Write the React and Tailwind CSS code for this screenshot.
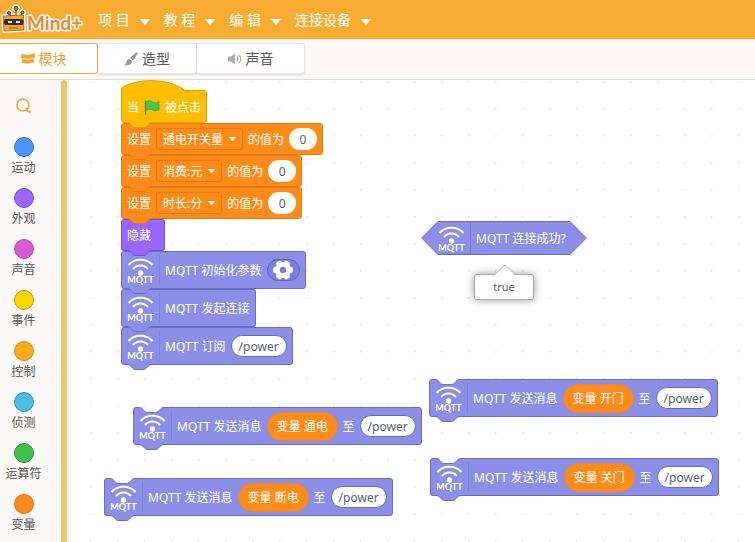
import React, { useState } from 'react';
import clsx from 'clsx';

const menus = ['项 目', '教 程', '编 辑', '连接设备'];

const categories = [
  { name: '运动', color: 'bg-[#4c97ff] border-[#3373cc]' },
  { name: '外观', color: 'bg-[#9966ff] border-[#774dcb]' },
  { name: '声音', color: 'bg-[#d65cd6] border-[#bd42bd]' },
  { name: '事件', color: 'bg-[#ffd500] border-[#cc9900]' },
  { name: '控制', color: 'bg-[#ffab19] border-[#cf8b17]' },
  { name: '侦测', color: 'bg-[#4cbfe6] border-[#2e8eb8]' },
  { name: '运算符', color: 'bg-[#40bf4a] border-[#389438]' },
  { name: '变量', color: 'bg-[#ff8c1a] border-[#db6e00]' },
];

const palette = {
  event: { box: 'bg-[#ffbf00] border-[#dca600]', fill: '#ffbf00', stroke: '#dca600' },
  data: { box: 'bg-[#ff8c1a] border-[#e57a0c]', fill: '#ff8c1a', stroke: '#e57a0c' },
  looks: { box: 'bg-[#9966ff] border-[#774dcb]', fill: '#9966ff', stroke: '#774dcb' },
  mqtt: { box: 'bg-[#8c8fe8] border-[#6a6cc0]', fill: '#8c8fe8', stroke: '#6a6cc0' },
};

const notchPath = 'M0 0 C2 0 3 1 4 2 L6 4 C7 5 8 5 9 5 H16 C17 5 18 5 19 4 L21 2 C22 1 23 0 25 0';

const Notch = ({ fill, stroke, className }) => (
  <svg className={clsx('absolute left-[5px] overflow-visible', className)} width="25" height="7" aria-hidden="true">
    <path d={`M0 -1 ${notchPath.replace('M', 'L')} V-1 Z`} fill={fill} />
    <path d={notchPath} transform="translate(0 .5)" fill={fill} stroke={stroke} />
  </svg>
);

const Block = ({ kind, open, className = 'h-8', children }) => {
  const c = palette[kind];
  return (
    <div
      className={clsx(
        'relative flex w-max items-center gap-[5px] rounded-[3px] border px-[5px] text-xs whitespace-nowrap text-white',
        c.box,
        className
      )}
    >
      {open && <Notch fill="#ffffff" stroke={c.stroke} className="-top-px" />}
      {children}
      <Notch fill={c.fill} stroke={c.stroke} className="top-full z-10" />
    </div>
  );
};

const Label = ({ children }) => <span className="pt-0.5">{children}</span>;

const MqttIcon = () => (
  <svg width="28" height="30" viewBox="0 0 28 30" fill="none" stroke="#fff" className="shrink-0" aria-hidden="true">
    <path d="M1.500 10 C7.500 3 19.500 3 25.500 10" strokeWidth="2.200" />
    <path d="M6 14 C10 9.300 17 9.300 21 14" strokeWidth="2.200" />
    <circle cx="13.500" cy="18" r="2.700" fill="#fff" stroke="none" />
    <text x="13.500" y="28" textAnchor="middle" fill="#fff" stroke="none" className="font-['Lato'] text-[9px] font-bold">
      MQTT
    </text>
  </svg>
);

const MqttBlock = ({ open, children }) => (
  <Block kind="mqtt" open={open} className="h-[38px]">
    <div className="border-r border-[#7e81d9] pr-1">
      <MqttIcon />
    </div>
    {children}
  </Block>
);

const Caret = () => (
  <svg width="7" height="4" viewBox="0 0 7 4" aria-hidden="true">
    <path d="M0 0H7L4 3.700Q3.500 4 3 3.700Z" fill="#fff" />
  </svg>
);

const VariableSelect = ({ name }) => (
  <button
    type="button"
    className="flex h-[22px] items-center gap-1.5 rounded-[3px] border border-[#ec7b0c] px-[6px] text-xs text-white"
  >
    <Label>{name}</Label>
    <Caret />
  </button>
);

const NumberInput = () => {
  const [value, setValue] = useState('0');
  return (
    <input
      aria-label="值"
      value={value}
      onChange={(e) => setValue(e.target.value)}
      className="h-[22px] w-7 rounded-full bg-white text-center text-xs text-[#575e75]"
    />
  );
};

const TopicInput = () => {
  const [value, setValue] = useState('/power');
  return (
    <input
      aria-label="主题"
      value={value}
      onChange={(e) => setValue(e.target.value)}
      className="h-[22px] w-14 rounded-full border border-[#6a6cc0] bg-white pt-px text-center text-xs text-[#575e75]"
    />
  );
};

const SetBlock = ({ name }) => (
  <Block kind="data">
    <Label>设置</Label>
    <VariableSelect name={name} />
    <Label>的值为</Label>
    <NumberInput />
  </Block>
);

const SendBlock = ({ variable }) => (
  <MqttBlock open>
    <Label>MQTT 发送消息</Label>
    <span className="flex h-[29px] w-[71px] items-center justify-center rounded-full border border-[#e58a3c] bg-[#ff8c1a]">
      <Label>变量 {variable}</Label>
    </span>
    <Label>至</Label>
    <TopicInput />
  </MqttBlock>
);

const HatBlock = () => (
  <div className="relative w-max pt-2.5">
    <Block kind="event" className="h-[33px] rounded-tl-none">
      <svg className="absolute -top-[11px] -left-px" width="68" height="13" aria-hidden="true">
        <path d="M0 13 V8 C16 -2 46 -2 62 9 C64 11 66 11.500 68 11.500 V13 Z" fill="#ffbf00" />
        <path d="M.5 13 V8 C16 -2 46 -2 62 9 C64 11 66 11.500 68 11.500" fill="none" stroke="#dca600" />
      </svg>
      <Label>当</Label>
      <svg width="16" height="16" viewBox="0 0 16 16" aria-hidden="true">
        <path d="M1.500 2 V15" stroke="#45993d" strokeWidth="1.400" strokeLinecap="round" />
        <path d="M2 3 C5 1 7 2 8.500 3 C10.500 4 12.500 4 15 2.500 V11 C12.500 12.500 10 12 8.500 11 C7 10 5 10 2 11.500Z" fill="#4cbf56" stroke="#45993d" strokeWidth=".7" />
      </svg>
      <Label>被点击</Label>
    </Block>
  </div>
);

const GearButton = () => (
  <button
    type="button"
    aria-label="设置参数"
    className="flex h-[22px] w-[33px] items-center justify-center rounded-full border border-[#5c60b8] bg-[#7c80dc]"
  >
    <svg width="20" height="20" viewBox="-10 -10 20 20">
      <g fill="#fff">
        <circle r="8" />
        {[30, 90, 150, 210, 270, 330].map((angle) => (
          <rect key={angle} x="-3" y="-9.900" width="6" height="6" rx="2" transform={`rotate(${angle})`} />
        ))}
      </g>
      <circle r="3.200" fill="#7c80dc" />
    </svg>
  </button>
);

const ReporterBlock = () => (
  <div className="flex h-[34px] w-max text-xs whitespace-nowrap text-white">
    <svg width="17" height="34" aria-hidden="true">
      <path d="M17 .5 L.7 17 L17 33.500" fill="#8c8fe8" stroke="#6a6cc0" />
    </svg>
    <div className="flex items-center gap-[5px] border-y border-[#6a6cc0] bg-[#8c8fe8] pr-1">
      <div className="flex h-full items-center border-r border-[#7679d2] pr-1">
        <MqttIcon />
      </div>
      <Label>MQTT 连接成功?</Label>
    </div>
    <svg width="17" height="34" aria-hidden="true">
      <path d="M0 .5 L16.300 17 L0 33.500" fill="#8c8fe8" stroke="#6a6cc0" />
    </svg>
  </div>
);

const ValueBubble = () => (
  <div className="relative flex h-[26px] w-[60px] items-center justify-center rounded-[3px] border border-[#aaa] bg-white text-[11px] text-[#575e75] shadow-[0_0_9px_rgba(0,0,0,0.4)]">
    <svg className="absolute -top-[11px] left-[18px]" width="24" height="12" aria-hidden="true">
      <path d="M1 11.500 L11 1.500 Q12 .5 13 1.500 L23 11.500" fill="#fff" stroke="#aaa" />
      <path d="M2 12 H22" stroke="#fff" />
    </svg>
    true
  </div>
);

const Logo = () => (
  <svg width="84" height="39" viewBox="0 0 84 39" role="img" aria-label="Mind+">
    <g stroke="#fff" strokeWidth="3.500" strokeLinejoin="round" fill="#fff">
      <path d="M3 16 L23.500 15 L24 30 L4 31Z" />
      <circle cx="9" cy="13" r="1.500" />
      <circle cx="16" cy="8" r="2" />
      <circle cx="22.500" cy="12.500" r="1.500" />
    </g>
    <g fill="#b07560" stroke="#5c3d30">
      <path d="M11 16 L9 13 M16 16 V9 M20 16 L22.500 13" />
      <circle cx="9" cy="13" r="1.500" />
      <circle cx="16" cy="8.500" r="2" />
      <circle cx="22.500" cy="12.500" r="1.500" />
    </g>
    <path d="M3 16 L23.500 15 L24 30 L4 31Z" fill="#f3a52b" stroke="#8a5a22" strokeWidth=".8" />
    <rect x="4" y="19" width="19.500" height="6" rx="2" fill="#2d2f30" />
    <path d="M8 22 H12 M16 22 H20" stroke="#cfe9ee" strokeWidth="2" />
    <path d="M9 28 H18" stroke="#b9701d" strokeWidth="1.200" />
    <text
      x="27"
      y="30"
      fill="#e8873a"
      stroke="#fff"
      strokeWidth="3"
      strokeLinejoin="round"
      paintOrder="stroke"
      className="font-['Lato'] text-[19px] font-bold"
    >
      Mind+
    </text>
  </svg>
);

const BlocksIcon = () => (
  <svg width="14" height="11" viewBox="0 0 14 11" fill="#f5a62f" aria-hidden="true">
    <path d="M0 1.500 Q2 .3 4.500 1.500 Q7 2.700 9 1.500 Q11 .3 14 .5 V5 Q11 4.800 9 5.500 Q7 6.500 4.500 5.500 Q2 4.800 0 5.500Z" />
    <path d="M1 6.300 Q3 5.700 4.500 6.500 Q7 7.500 9 6.500 Q11 5.700 13 5.800 V9.500 Q11 9.300 9 10.200 Q6 11.300 4 10.300 L1 10Z" />
  </svg>
);

const BrushIcon = () => (
  <svg width="14" height="14" viewBox="0 0 14 14" fill="#999" aria-hidden="true">
    <path d="M12 .5 C13 0 14 1 13.500 2 L9 8.500 L6 6Z" />
    <path d="M5.300 6.800 L8.200 9.300 C8 13 3.500 14 .3 12.700 C3 12 2 7.500 5.300 6.800Z" />
  </svg>
);

const SpeakerIcon = () => (
  <svg width="14" height="12" viewBox="0 0 14 12" fill="none" stroke="#aaa" aria-hidden="true">
    <path d="M0 3.500 H3 L7 .5 V11.500 L3 8.500 H0Z" fill="#aaa" stroke="none" />
    <path d="M9 3.500 Q10.500 6 9 8.500 M11.300 2 Q14 6 11.300 10" strokeWidth="1.300" />
  </svg>
);

const tabs = [
  { name: '模块', icon: BlocksIcon, width: 'w-[98px]' },
  { name: '造型', icon: BrushIcon, width: 'w-[99px]' },
  { name: '声音', icon: SpeakerIcon, width: 'w-[108px]' },
];

const App = () => {
  const [activeTab, setActiveTab] = useState(0);

  return (
    <div className="flex h-screen flex-col overflow-hidden bg-white font-['Noto_Sans','Noto_Sans_CJK_SC',sans-serif]">
      <header className="flex h-[39px] shrink-0 items-center bg-[#f9ac32]">
        <Logo />
        <nav className="ml-3.5 flex gap-3.5">
          {menus.map((menu) => (
            <button key={menu} type="button" className="flex items-center gap-2.5 text-sm text-white">
              {menu}
              <svg width="10" height="6" className="mt-1" aria-hidden="true">
                <path d="M0 0H10L5 6Z" fill="#fff" />
              </svg>
            </button>
          ))}
        </nav>
      </header>

      <div className="flex h-[41px] shrink-0 items-start border-b border-[#dedbd0] bg-[#fef9f4] pt-1">
        {tabs.map(({ name, icon: Icon, width }, index) => (
          <button
            key={name}
            type="button"
            onClick={() => setActiveTab(index)}
            className={clsx(
              'flex h-[31px] items-center justify-center gap-1 border border-l-0 bg-white text-sm',
              width,
              index === activeTab
                ? 'rounded-r-[3px] border-[#efa83a] pr-2.5 text-[#f0a02c]'
                : 'border-[#e4e4e4] text-[#575757] shadow-sm last:rounded-r-[3px]'
            )}
          >
            <Icon />
            {name}
          </button>
        ))}
      </div>

      <div className="flex min-h-0 flex-1">
        <aside className="flex w-[61px] shrink-0 flex-col overflow-hidden bg-[#fcfaf8] pr-[14px]">
          <button type="button" aria-label="搜索" className="flex h-[51px] shrink-0 items-center justify-center">
            <svg width="16" height="16" viewBox="0 0 16 16" fill="none" stroke="#f0a83a">
              <circle cx="7" cy="7" r="6" strokeWidth="1.700" />
              <path d="M10 10 L12 13.500 L15 14" strokeWidth="1.800" />
            </svg>
          </button>
          <ul className="mt-1.5">
            {categories.map((category) => (
              <li key={category.name}>
                <button type="button" className="flex h-[51px] w-full flex-col items-center gap-px text-xs text-[#555]">
                  <span className={clsx('size-5 shrink-0 rounded-full border', category.color)} />
                  <span className="leading-5 whitespace-nowrap">{category.name}</span>
                </button>
              </li>
            ))}
          </ul>
        </aside>
        <div className="w-1.5 shrink-0 rounded-t-full bg-[#eac86c]" />

        <main className="relative min-w-0 flex-1 overflow-hidden border-l-2 border-[#f1eff0] bg-[radial-gradient(circle,#e8e8e8_1px,transparent_1px)] bg-size-[27px_27px] bg-position-[8px_-12px]">
          <div className="absolute top-0 left-[52px]">
            <HatBlock />
            <SetBlock name="通电开关量" />
            <SetBlock name="消费:元" />
            <SetBlock name="时长:分" />
            <Block kind="looks" className="h-8 pr-[13px]">
              <Label>隐藏</Label>
            </Block>
            <MqttBlock>
              <Label>MQTT 初始化参数</Label>
              <GearButton />
            </MqttBlock>
            <MqttBlock>
              <Label>MQTT 发起连接</Label>
            </MqttBlock>
            <MqttBlock>
              <Label>MQTT 订阅</Label>
              <TopicInput />
            </MqttBlock>
          </div>

          <div className="absolute top-[141px] left-[352px]">
            <ReporterBlock />
          </div>
          <div className="absolute top-[194px] left-[405px]">
            <ValueBubble />
          </div>

          <div className="absolute top-[299px] left-[360px]">
            <SendBlock variable="开门" />
          </div>
          <div className="absolute top-[327px] left-[64px]">
            <SendBlock variable="通电" />
          </div>
          <div className="absolute top-[378px] left-[361px]">
            <SendBlock variable="关门" />
          </div>
          <div className="absolute top-[398px] left-[35px]">
            <SendBlock variable="断电" />
          </div>
        </main>
      </div>
    </div>
  );
};

export default App;
